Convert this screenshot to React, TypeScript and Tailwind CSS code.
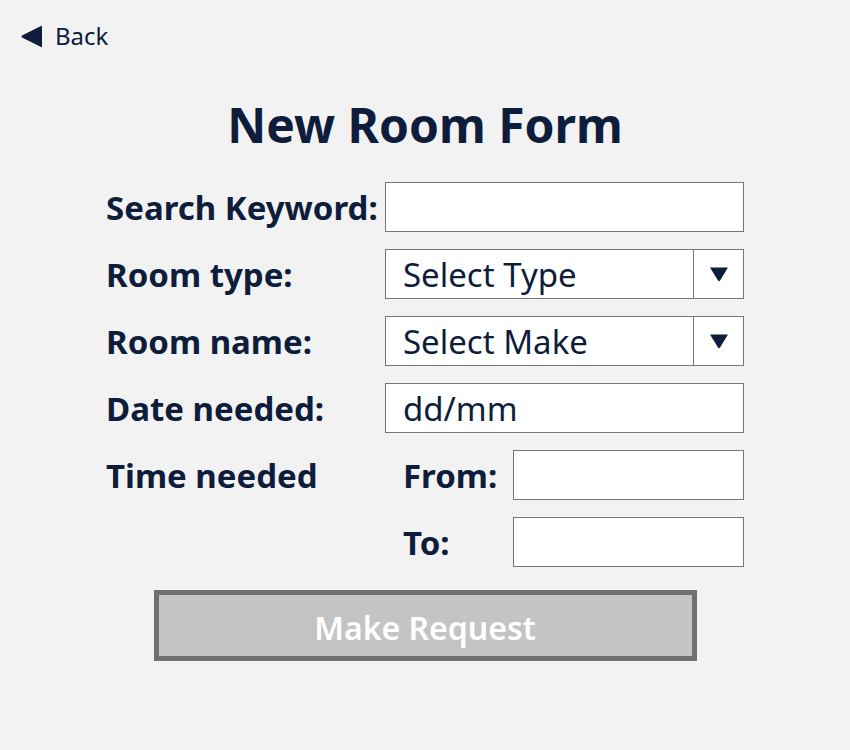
const font = { fontFamily: '"Noto Sans", "Open Sans", sans-serif' };

const Field = ({ children }: { children?: React.ReactNode }) => (
  <div className="h-[50px] border border-[#767676] bg-white flex items-center">{children}</div>
);

const Select = ({ placeholder }: { placeholder: string }) => (
  <div className="h-[50px] border border-[#767676] bg-white flex items-stretch">
    <div className="flex-1 flex items-center pl-[17px] text-[33px] leading-none">{placeholder}</div>
    <div className="w-[50px] border-l border-[#767676] flex items-center justify-center">
      <svg width="20" height="16" viewBox="0 0 20 16">
        <path d="M1 1.5 H19 L11 14.5 Q10 15.8 9 14.5 Z" fill="#0d1d3b" />
      </svg>
    </div>
  </div>
);

const label = 'text-[33px] font-bold leading-none whitespace-nowrap';

export default function App() {
  return (
    <div className="min-h-[750px] bg-[#f2f2f2] text-[#0d1d3b]" style={font}>
      {/* Back */}
      <div className="flex items-center gap-[12px] pl-[20px] pt-[22px] h-[50px]">
        <svg width="23" height="25" viewBox="0 0 23 25">
          <path d="M21 2 Q22 1 22 3 V22 Q22 24 21 23 L2 13.5 Q1 12.5 2 11.5 Z" fill="#0d1d3b" />
        </svg>
        <span className="text-[24px] leading-none">Back</span>
      </div>

      {/* Title */}
      <h1 className="text-center text-[48px] font-bold leading-none mt-[51px] mb-[33px]">New Room Form</h1>

      {/* Form */}
      <div className="w-[638px] mx-auto grid grid-cols-[279px_359px] gap-y-[17px] items-center">
        <label className={label}>Search Keyword:</label>
        <Field />

        <label className={label}>Room type:</label>
        <Select placeholder="Select Type" />

        <label className={label}>Room name:</label>
        <Select placeholder="Select Make" />

        <label className={label}>Date needed:</label>
        <Field>
          <span className="pl-[17px] text-[33px] leading-none">dd/mm</span>
        </Field>

        <label className={label}>Time needed</label>
        <div className="grid grid-cols-[128px_231px] items-center">
          <span className={`pl-[18px] ${label}`}>From:</span>
          <Field />
        </div>

        <div />
        <div className="grid grid-cols-[128px_231px] items-center">
          <span className={`pl-[18px] ${label}`}>To:</span>
          <Field />
        </div>
      </div>

      <div className="flex justify-center mt-[23px]">
        <button className="w-[543px] h-[71px] border-[5px] border-[#707070] bg-[#c4c4c4] text-white text-[32px] font-semibold pt-[4px]">
          Make Request
        </button>
      </div>
    </div>
  );
}
